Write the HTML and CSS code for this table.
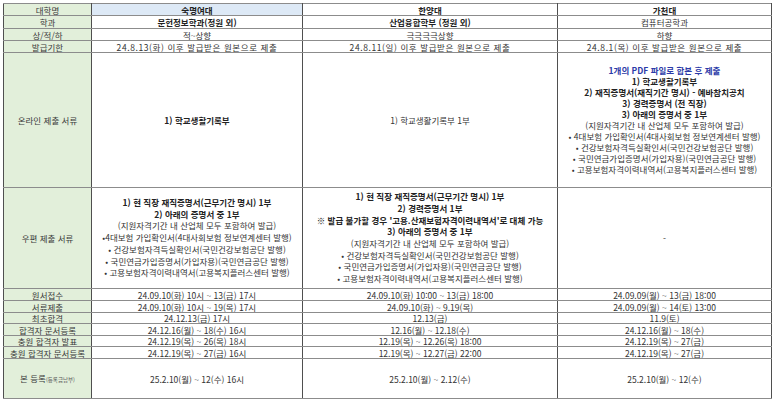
FILE: index.html
```html
<!DOCTYPE html>
<html lang="ko">
<head>
<meta charset="utf-8">
<title>대학별 제출 서류 및 일정</title>
<link rel="stylesheet" href="styles.css">
</head>
<body>
<table class="sheet">
  <colgroup>
    <col class="c-label">
    <col class="c-a">
    <col class="c-b">
    <col class="c-c">
  </colgroup>
  <tr class="r12">
    <th class="lbl">대학명</th>
    <td class="strong blue">숙명여대</td>
    <td class="strong">한양대</td>
    <td class="strong">가천대</td>
  </tr>
  <tr class="r13">
    <th class="lbl">학과</th>
    <td class="strong">문헌정보학과(정원 외)</td>
    <td class="strong">산업융합학부 (정원 외)</td>
    <td>컴퓨터공학과</td>
  </tr>
  <tr class="r12">
    <th class="lbl">상/적/하</th>
    <td>적~상향</td>
    <td>극극극극상향</td>
    <td>하향</td>
  </tr>
  <tr class="r12 spaced">
    <th class="lbl">발급기한</th>
    <td>24.8.13(화) 이후 발급받은 원본으로 제출</td>
    <td>24.8.11(일) 이후 발급받은 원본으로 제출</td>
    <td>24.8.1(목) 이후 발급받은 원본으로 제출</td>
  </tr>
  <tr class="r-online">
    <th class="lbl">온라인 제출 서류</th>
    <td class="strong">1) 학교생활기록부</td>
    <td>1) 학교생활기록부 1부</td>
    <td class="list online">
      <div class="note">1개의 PDF 파일로 합본 후 제출</div>
      <div class="strong">1) 학교생활기록부</div>
      <div class="strong">2) 재직증명서(재직기간 명시) - 예바참치공치</div>
      <div class="strong">3) 경력증명서 (전 직장)</div>
      <div class="strong">3) 아래의 증명서 중 1부</div>
      <div>(지원자격기간 내 산업체 모두 포함하여 발급)</div>
      <div>• 4대보험 가입확인서(4대사회보험 정보연계센터 발행)</div>
      <div>• 건강보험자격득실확인서(국민건강보험공단 발행)</div>
      <div>• 국민연금가입증명서(가입자용)(국민연금공단 발행)</div>
      <div>• 고용보험자격이력내역서(고용복지플러스센터 발행)</div>
    </td>
  </tr>
  <tr class="r-post">
    <th class="lbl">우편 제출 서류</th>
    <td class="list">
      <div class="strong">1) 현 직장 재직증명서(근무기간 명시) 1부</div>
      <div class="strong">2) 아래의 증명서 중 1부</div>
      <div>(지원자격기간 내 산업체 모두 포함하여 발급)</div>
      <div>•4대보험 가입확인서(4대사회보험 정보연계센터 발행)</div>
      <div>• 건강보험자격득실확인서(국민건강보험공단 발행)</div>
      <div>• 국민연금가입증명서(가입자용)(국민연금공단 발행)</div>
      <div>• 고용보험자격이력내역서(고용복지플러스센터 발행)</div>
    </td>
    <td class="list">
      <div class="strong">1) 현 직장 재직증명서(근무기간 명시) 1부</div>
      <div class="strong">2) 경력증명서 1부</div>
      <div class="strong">※ 발급 불가할 경우 '고용.산재보험자격이력내역서'로 대체 가능</div>
      <div class="strong">3) 아래의 증명서 중 1부</div>
      <div>(지원자격기간 내 산업체 모두 포함하여 발급)</div>
      <div>• 건강보험자격득실확인서(국민건강보험공단 발행)</div>
      <div>• 국민연금가입증명서(가입자용)(국민연금공단 발행)</div>
      <div>• 고용보험자격이력내역서(고용복지플러스센터 발행)</div>
    </td>
    <td>-</td>
  </tr>
  <tr class="r12">
    <th class="lbl">원서접수</th>
    <td>24.09.10(화) 10시 ~ 13(금) 17시</td>
    <td>24.09.10(화) 10:00 ~ 13(금) 18:00</td>
    <td>24.09.09(월) ~ 13(금) 18:00</td>
  </tr>
  <tr class="r12">
    <th class="lbl">서류제출</th>
    <td>24.09.10(화) 10시 ~ 19(목) 17시</td>
    <td>24.09.10(화) ~ 9.19(목)</td>
    <td>24.09.09(월) ~ 14(토) 13:00</td>
  </tr>
  <tr class="r11">
    <th class="lbl">최초합격</th>
    <td>24.12.13(금) 17시</td>
    <td>12.13(금)</td>
    <td>11.9(토)</td>
  </tr>
  <tr class="r12">
    <th class="lbl">합격자 문서등록</th>
    <td>24.12.16(월) ~ 18(수) 16시</td>
    <td>12.16(월) ~ 12.18(수)</td>
    <td>24.12.16(월) ~ 18(수)</td>
  </tr>
  <tr class="r11">
    <th class="lbl">충원 합격자 발표</th>
    <td>24.12.19(목) ~ 26(목) 18시</td>
    <td>12.19(목) ~ 12.26(목) 18:00</td>
    <td>24.12.19(목) ~ 27(금)</td>
  </tr>
  <tr class="r12">
    <th class="lbl">충원 합격자 문서등록</th>
    <td>24.12.19(목) ~ 27(금) 16시</td>
    <td>12.19(목) ~ 12.27(금) 22:00</td>
    <td>24.12.19(목) ~ 27(금)</td>
  </tr>
  <tr class="r-final">
    <th class="lbl">본 등록<span class="tiny">(등록금납부)</span></th>
    <td>25.2.10(월) ~ 12(수) 16시</td>
    <td>25.2.10(월) ~ 2.12(수)</td>
    <td>25.2.10(월) ~ 12(수)</td>
  </tr>
</table>
</body>
</html>
```
FILE: styles.css
```css
html, body {
  margin: 0;
  padding: 0;
  background: #ffffff;
}

body {
  padding: 3px 0 0 3px;
  font-family: "Noto Sans CJK KR", "Noto Sans", sans-serif;
  font-size: 8.5px;
  color: #333333;
}

.sheet {
  border-collapse: collapse;
  table-layout: fixed;
  width: 768px;
  border: 1px solid #555555;
}

.c-label { width: 88px; }
.c-a { width: 211px; }
.c-b { width: 255px; }
.c-c { width: 214px; }

.sheet th,
.sheet td {
  padding: 0;
  text-align: center;
  vertical-align: middle;
  line-height: 10px;
  white-space: nowrap;
  overflow: hidden;
  border-top: 1px solid #8c8c8c;
  border-bottom: 1px solid #8c8c8c;
  border-left: 1px solid #4f4f4f;
  border-right: 1px solid #4f4f4f;
  font-weight: 400;
}

.sheet .lbl {
  background: #e2efda;
  color: #3a3a3a;
}

.sheet .blue {
  background: #dde9f6;
}

.sheet .strong {
  font-weight: 700;
  color: #222222;
}

.spaced td {
  letter-spacing: 0.6px;
}

.r11 { height: 11px; }
.r12 { height: 12px; }
.r13 { height: 13px; }
.r-online { height: 135px; }
.r-post { height: 101px; }
.r-final { height: 40px; }

.list div {
  line-height: 11.7px;
}

.list.online div {
  line-height: 11px;
}

.sheet .note {
  color: #2b3aa8;
  font-weight: 700;
}

.tiny {
  font-size: 5.5px;
  color: #555555;
}
```
